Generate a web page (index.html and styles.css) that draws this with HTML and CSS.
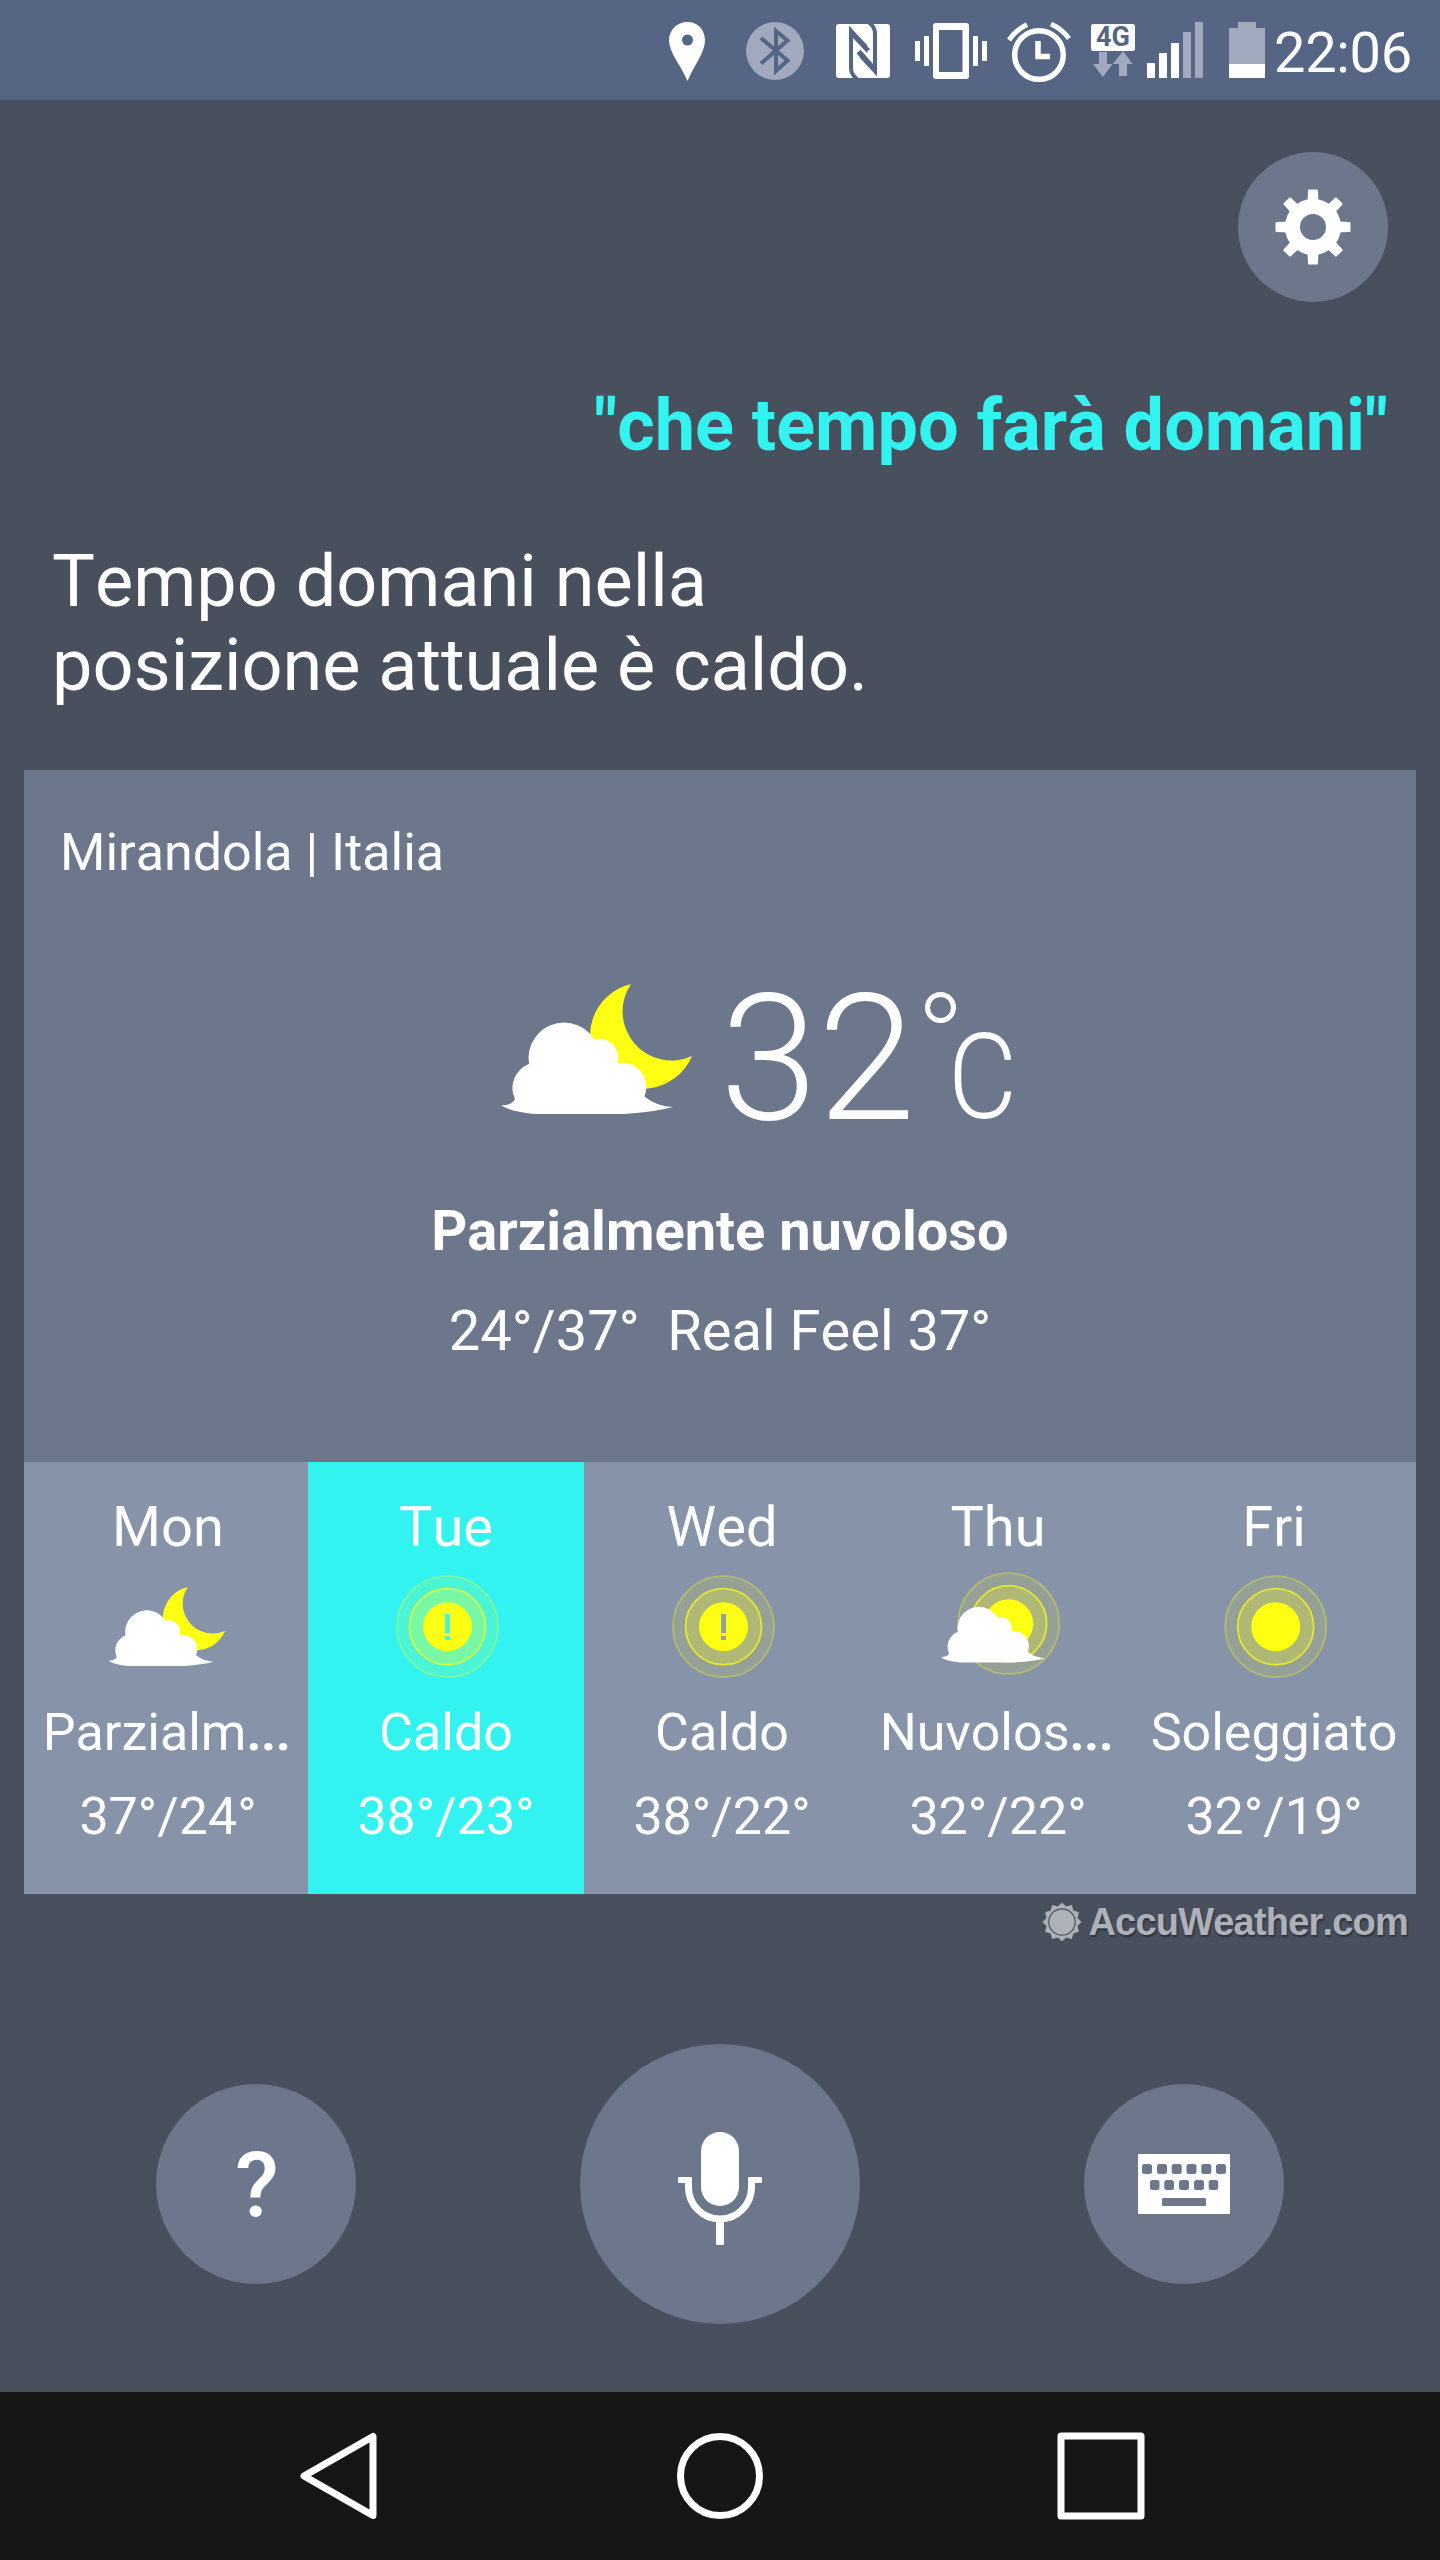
FILE: index.html
```
<!DOCTYPE html>
<html lang="it">
<head>
    <meta charset="UTF-8">
    <meta name="viewport" content="width=device-width, initial-scale=1.0">
    <title>Tempo domani</title>
    <link rel="stylesheet" href="styles.css">
</head>
<body>
    <!-- Shared weather shapes -->
    <svg class="defs" width="0" height="0">
        <defs>
            <g id="cloud" fill="#fff">
                <circle cx="63" cy="74" r="35.5"/>
                <circle cx="98" cy="74" r="19.3"/>
                <circle cx="121" cy="103" r="24.3"/>
                <circle cx="37" cy="104" r="25.6"/>
                <path d="M14 115Q10 122 0 121.3Q9 127.500 33 130H123Q154 128 172 123Q156 122.500 144 113L120 80H40Z"/>
            </g>
            <path id="moon" fill="#ffff14" d="M130 0A53 53 0 1 0 191 72A49 49 0 0 1 130 0Z"/>
            <g id="rings">
                <circle r="50.500" fill="#ffff14" fill-opacity=".12" stroke="#ffff14" stroke-opacity=".32" stroke-width="1.800"/>
                <path fill="#ffff14" fill-opacity=".25" fill-rule="evenodd" d="M-38 0a38 38 0 1 0 76 0a38 38 0 1 0-76 0ZM-24 0a24 24 0 1 0 48 0a24 24 0 1 0-48 0Z"/>
                <circle r="38" fill="none" stroke="#ffff14" stroke-opacity=".7" stroke-width="1.800"/>
            </g>
            <path id="disc-alert" fill="#ffff14" fill-rule="evenodd" d="M-24.500 0a24.500 24.500 0 1 0 49 0a24.500 24.500 0 1 0-49 0ZM-2.500-12.700h5v19h-5ZM-2.500 9.300h5v4h-5Z"/>
        </defs>
    </svg>

    <div class="status-bar">
        <svg class="status-icons" width="620" height="100" viewBox="654 0 620 100">
            <!-- location -->
            <path fill="#fff" fill-rule="evenodd" d="M687.500 22C677 22 669 30 669 40.500C669 52 680 64 687.500 81C695 64 705 52 705 40.500C705 30 698 22 687.500 22ZM687.500 34.500a5.500 5.500 0 1 1 0 11a5.500 5.500 0 1 1 0-11Z"/>
            <!-- bluetooth -->
            <circle cx="775" cy="51" r="29" fill="#a0a9bd"/>
            <path fill="none" stroke="#566584" stroke-width="4" d="M761 38L787.500 60.500L776 71V31L787.500 40.500L761 63.500"/>
            <!-- nfc -->
            <rect x="836" y="24" width="54" height="54" rx="3" fill="#fff"/>
            <path fill="none" stroke="#566584" stroke-width="4" d="M857 79C853 76 851 73 851 68V31L868.500 50.500M869 23C873 25 875 29 875 34V71L858 52"/>
            <path fill="#566584" d="M849 26L867 45V53L853 38V60H849ZM877 76L860 58V49L873 64V42H877Z"/>
            <!-- vibrate -->
            <path fill="#fff" fill-rule="evenodd" d="M936 23h30q3 0 3 3v50q0 3-3 3h-30q-3 0-3-3V26q0-3 3-3ZM939 30v42h23.500V30Z"/>
            <path fill="#fff" d="M915 41h5v20h-5ZM924 36h5v30h-5ZM973 36h5v30h-5ZM982 41h5v20h-5Z"/>
            <!-- alarm -->
            <g fill="none" stroke="#fff" stroke-width="5.500">
                <circle cx="1039" cy="55" r="24.300"/>
                <path d="M1038 41V56.500H1050"/>
                <path stroke-width="5" d="M1009 40Q1016 30 1027 24.500M1069 38.500Q1062 29 1051 24"/>
            </g>
            <!-- network -->
            <rect x="1091" y="24" width="44" height="27" rx="2.500" fill="#fff"/>
            <text class="network-label" x="1113" y="46.300">4G</text>
            <path fill="#a0a9bd" d="M1099 52h8v12h5.500l-9.700 13-9.700-13h5.900ZM1119 76V64h-6.300l10.300-13 9.700 13h-5.700v12Z"/>
            <!-- signal -->
            <path fill="#fff" d="M1147 63h8v15h-8ZM1159 53h8v25h-8ZM1171 43h8v35h-8Z"/>
            <path fill="#a0a9bd" d="M1183 32h8v46h-8ZM1195 22h8v56h-8Z"/>
            <!-- battery -->
            <path fill="#a0a9bd" d="M1229 28h9v-6h18v6h9v36h-36Z"/>
            <path fill="#fff" d="M1229 64h36v14h-36Z"/>
        </svg>
        <span class="clock">22:06</span>
    </div>

    <div class="content">
        <div class="settings">
            <svg width="76" height="76" viewBox="-38 -38 76 76">
                <g id="teeth" fill="#fff">
                    <path id="tooth" d="M-4-37.500h8q1 0 1 1.500l.500 12h-11l.500-12q0-1.500 1-1.500Z"/>
                    <use href="#tooth" transform="rotate(45)"/>
                    <use href="#tooth" transform="rotate(90)"/>
                    <use href="#tooth" transform="rotate(135)"/>
                    <use href="#tooth" transform="rotate(180)"/>
                    <use href="#tooth" transform="rotate(225)"/>
                    <use href="#tooth" transform="rotate(270)"/>
                    <use href="#tooth" transform="rotate(315)"/>
                </g>
                <circle r="20.500" fill="none" stroke="#fff" stroke-width="15"/>
            </svg>
        </div>

        <p class="query">"che tempo farà domani"</p>
        <p class="reply">Tempo domani nella<br>posizione attuale è caldo.</p>

        <div class="card">
            <div class="current">
                <p class="location">Mirandola | Italia</p>
                <div class="now">
                    <svg width="192" height="130" viewBox="0 0 192 130">
                        <use href="#moon"/>
                        <use href="#cloud"/>
                    </svg>
                    <span class="degrees">32</span>
                    <span class="ring"></span>
                    <span class="unit">C</span>
                </div>
                <p class="condition">Parzialmente nuvoloso</p>
                <p class="feel">24°/37°&nbsp; Real Feel 37°</p>
            </div>
            <div class="forecast">
                <div class="day">
                    <span class="name">Mon</span>
                    <svg width="128" height="108">
                        <g transform="translate(4.300 15) scale(.612 .607)">
                            <use href="#moon"/>
                            <use href="#cloud"/>
                        </g>
                    </svg>
                    <span class="desc">Parzialm<b>...</b></span>
                    <span class="temps">37°/24°</span>
                </div>
                <div class="day active">
                    <span class="name">Tue</span>
                    <svg width="128" height="108">
                        <g transform="translate(65.500 54.700)">
                            <use href="#rings"/>
                            <use href="#disc-alert"/>
                        </g>
                    </svg>
                    <span class="desc">Caldo</span>
                    <span class="temps">38°/23°</span>
                </div>
                <div class="day">
                    <span class="name">Wed</span>
                    <svg width="128" height="108">
                        <g transform="translate(65.500 54.700)">
                            <use href="#rings"/>
                            <use href="#disc-alert"/>
                        </g>
                    </svg>
                    <span class="desc">Caldo</span>
                    <span class="temps">38°/22°</span>
                </div>
                <div class="day">
                    <span class="name">Thu</span>
                    <svg width="128" height="108">
                        <g transform="translate(74.700 51.700)">
                            <use href="#rings"/>
                            <circle r="24.500" fill="#ffff14"/>
                        </g>
                        <use href="#cloud" transform="translate(6.700 11.500) scale(.607)"/>
                    </svg>
                    <span class="desc">Nuvolos<b>...</b></span>
                    <span class="temps">32°/22°</span>
                </div>
                <div class="day">
                    <span class="name">Fri</span>
                    <svg width="128" height="108">
                        <g transform="translate(65.700 54.700)">
                            <use href="#rings"/>
                            <circle r="24.500" fill="#ffff14"/>
                        </g>
                    </svg>
                    <span class="desc">Soleggiato</span>
                    <span class="temps">32°/19°</span>
                </div>
            </div>
        </div>

        <div class="credit">
            <svg width="40" height="40" viewBox="-20 -20 40 40">
                <path fill="#adb1b9" d="M0-19.500L4-15.500L9.700-16.900L11.400-11.400L16.900-9.700L15.500-4L19.500 0L15.500 4L16.900 9.700L11.400 11.400L9.700 16.900L4 15.500L0 19.500L-4 15.500L-9.700 16.900L-11.400 11.400L-16.900 9.700L-15.500 4L-19.500 0L-15.500-4L-16.900-9.700L-11.400-11.400L-9.700-16.900L-4-15.500Z"/>
                <circle r="13.200" fill="none" stroke="#48505d" stroke-width="1.200"/>
            </svg>
            <span>AccuWeather.com</span>
        </div>
    </div>

    <div class="actions">
        <div class="round help">?</div>
        <div class="round mic">
            <svg width="84" height="114" viewBox="0 0 84 114">
                <rect x="23" y="0" width="38" height="74" rx="19" fill="#fff"/>
                <path fill="none" stroke="#fff" stroke-width="7" d="M10.500 46V55a31.500 32 0 0 0 63 0V46"/>
                <rect x="0" y="45" width="14" height="6" rx="1" fill="#fff"/>
                <rect x="70" y="45" width="14" height="6" rx="1" fill="#fff"/>
                <rect x="38" y="88" width="8" height="25" rx="1.500" fill="#fff"/>
            </svg>
        </div>
        <div class="round">
            <svg width="92" height="60" viewBox="0 0 92 60">
                <rect width="92" height="60" rx="1" fill="#fff"/>
                <g fill="#6c778c">
                    <rect x="4" y="10" width="10" height="10" rx="2.500"/>
                    <rect x="19" y="10" width="10" height="10" rx="2.500"/>
                    <rect x="33.700" y="10" width="10" height="10" rx="2.500"/>
                    <rect x="48.500" y="10" width="10" height="10" rx="2.500"/>
                    <rect x="63.300" y="10" width="10" height="10" rx="2.500"/>
                    <rect x="78" y="10" width="10" height="10" rx="2.500"/>
                    <rect x="12" y="26" width="9.500" height="10" rx="2.500"/>
                    <rect x="26.300" y="26" width="9.700" height="10" rx="2.500"/>
                    <rect x="41" y="26" width="10" height="10" rx="2.500"/>
                    <rect x="56" y="26" width="10" height="10" rx="2.500"/>
                    <rect x="70.700" y="26" width="9.500" height="10" rx="2.500"/>
                    <rect x="24" y="44" width="44" height="8" rx="1.500"/>
                </g>
            </svg>
        </div>
    </div>

    <div class="nav-bar">
        <svg width="90" height="90" viewBox="0 0 90 90"><path d="M79 5.500V84.500L10 45Z"/></svg>
        <svg width="90" height="90" viewBox="0 0 90 90"><circle cx="45" cy="45" r="39.500"/></svg>
        <svg width="90" height="90" viewBox="0 0 90 90"><rect x="5" y="5" width="80" height="80"/></svg>
    </div>
</body>
</html>
```
FILE: styles.css
```
* {
    box-sizing: border-box;
}
body {
    margin: 0;
    width: 1440px;
    height: 2560px;
    display: flex;
    flex-direction: column;
    background-color: #48505d;
    color: white;
    font-family: Roboto, "Noto Sans", sans-serif;
    font-kerning: none;
    overflow: hidden;
}
p {
    margin: 0;
}
svg {
    display: block;
    flex-shrink: 0;
    overflow: visible;
}
.defs {
    display: none;
}

.status-bar {
    height: 100px;
    flex-shrink: 0;
    display: flex;
    justify-content: flex-end;
    background-color: #566584;
    padding-right: 27px;
}
.network-label {
    font-size: 27px;
    font-weight: bold;
    fill: #566584;
    text-anchor: middle;
}
.clock {
    width: 139px;
    font-size: 56px;
    line-height: 66px;
    padding-top: 20px;
    letter-spacing: -0.3px;
    white-space: nowrap;
}

.content {
    height: 1944px;
    flex-shrink: 0;
    padding: 52px 24px 0;
    display: flex;
    flex-direction: column;
}
.settings {
    width: 150px;
    height: 150px;
    margin-right: 28px;
    align-self: flex-end;
    display: flex;
    justify-content: center;
    align-items: center;
    border-radius: 50%;
    background-color: #6c778c;
}
.query {
    margin: 82px 28px 0;
    font-size: 72px;
    line-height: 84px;
    font-weight: bold;
    text-align: right;
    color: #33f3f0;
}
.reply {
    margin: 72px 28px 62px;
    font-size: 72px;
    line-height: 84px;
}

.card {
    height: 1124px;
    display: flex;
    flex-direction: column;
    flex-shrink: 0;
}
.current {
    height: 692px;
    padding-top: 52px;
    background-color: #6c778c;
    text-align: center;
}
.location {
    padding-left: 36px;
    font-size: 52px;
    line-height: 61px;
    text-align: left;
}
.now {
    height: 180px;
    margin-top: 82px;
    padding-left: 477px;
    display: flex;
    align-items: flex-start;
    font-weight: 300;
}
.now svg {
    margin-top: 19px;
}
.degrees {
    margin: -9px 0 0 27px;
    width: 200px;
    font-size: 176px;
    line-height: 206px;
    text-align: left;
}
.ring {
    width: 31px;
    height: 31px;
    margin: 27px 0 0 5px;
    border: 5px solid white;
    border-radius: 50%;
}
.unit {
    margin: 44px 0 0 -8px;
    font-size: 118px;
    line-height: 138px;
    transform: scaleX(0.9);
    transform-origin: left;
}
.condition {
    margin-top: 53px;
    font-size: 56px;
    line-height: 66px;
    font-weight: bold;
}
.feel {
    margin-top: 34px;
    font-size: 56px;
    line-height: 66px;
}

.forecast {
    height: 432px;
    display: grid;
    grid-template-columns: 280px repeat(4, 276px);
    padding: 0 4px;
    background-color: #8793a9;
}
.day {
    display: flex;
    flex-direction: column;
    align-items: center;
    padding-top: 32px;
    font-size: 52px;
    line-height: 61px;
    white-space: nowrap;
}
.day.active {
    background-color: #33f3f0;
}
.name {
    font-size: 56px;
    line-height: 66px;
}
.day svg {
    margin: 12px 0 22px;
}
.desc b {
    margin-right: 3px;
    letter-spacing: -0.5px;
}
.temps {
    margin-top: 23px;
}

.credit {
    display: flex;
    align-items: center;
    justify-content: flex-end;
    height: 56px;
    padding-right: 8px;
    gap: 6px;
    font-family: "Liberation Sans", Arial, sans-serif;
    font-size: 38px;
    font-weight: bold;
    letter-spacing: -0.8px;
    color: #adb1b9;
    text-shadow: 1px 2px 2px rgba(0, 0, 0, 0.4);
}

.actions {
    height: 280px;
    flex-shrink: 0;
    padding: 0 156px;
    display: flex;
    align-items: center;
    justify-content: space-between;
}
.round {
    width: 200px;
    height: 200px;
    display: flex;
    justify-content: center;
    align-items: center;
    border-radius: 50%;
    background-color: #6c778c;
    font-size: 90px;
    font-weight: 500;
}
.round.help {
    padding: 3px 0 0 2px;
}
.round.mic {
    width: 280px;
    height: 280px;
}
.mic svg {
    margin-top: 9px;
}

.nav-bar {
    height: 168px;
    margin-top: 68px;
    flex-shrink: 0;
    display: flex;
    justify-content: center;
    gap: 291px;
    padding-top: 39px;
    background-color: #161616;
}
.nav-bar svg {
    fill: none;
    stroke: white;
    stroke-width: 7px;
    stroke-linejoin: round;
}
```
